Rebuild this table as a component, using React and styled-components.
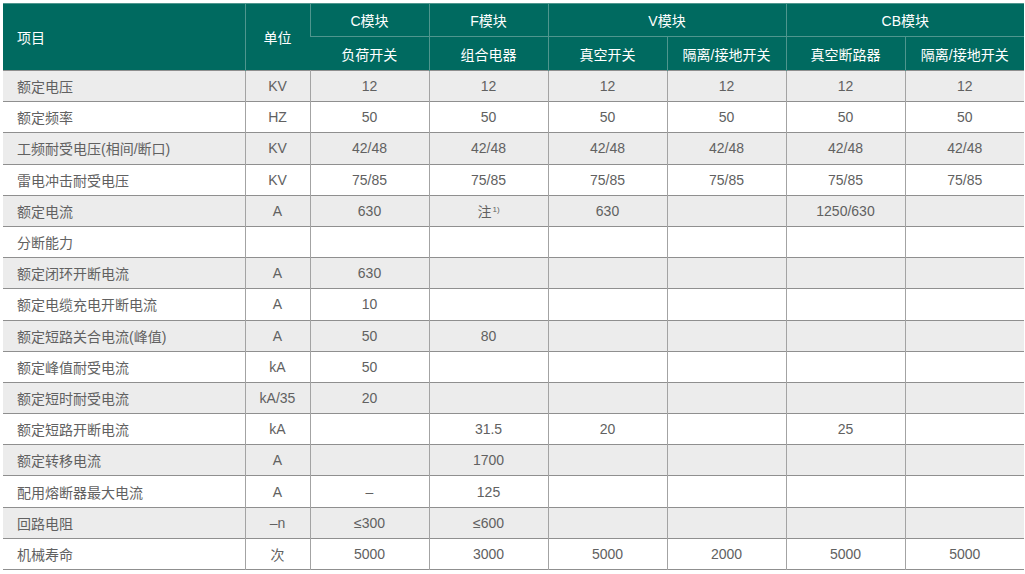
import React from "react";
import styled, { createGlobalStyle } from "styled-components";

const GlobalStyle = createGlobalStyle`
  body {
    margin: 0;
    background: #ffffff;
    font-family: "Liberation Sans", "Noto Sans CJK SC", sans-serif;
  }
`;

const rows = [
  ["额定电压", "KV", "12", "12", "12", "12", "12", "12"],
  ["额定频率", "HZ", "50", "50", "50", "50", "50", "50"],
  ["工频耐受电压(相间/断口)", "KV", "42/48", "42/48", "42/48", "42/48", "42/48", "42/48"],
  ["雷电冲击耐受电压", "KV", "75/85", "75/85", "75/85", "75/85", "75/85", "75/85"],
  ["额定电流", "A", "630", "note", "630", "", "1250/630", ""],
  ["分断能力", "", "", "", "", "", "", ""],
  ["额定闭环开断电流", "A", "630", "", "", "", "", ""],
  ["额定电缆充电开断电流", "A", "10", "", "", "", "", ""],
  ["额定短路关合电流(峰值)", "A", "50", "80", "", "", "", ""],
  ["额定峰值耐受电流", "kA", "50", "", "", "", "", ""],
  ["额定短时耐受电流", "kA/35", "20", "", "", "", "", ""],
  ["额定短路开断电流", "kA", "", "31.5", "20", "", "25", ""],
  ["额定转移电流", "A", "", "1700", "", "", "", ""],
  ["配用熔断器最大电流", "A", "–", "125", "", "", "", ""],
  ["回路电阻", "–n", "≤300", "≤600", "", "", "", ""],
  ["机械寿命", "次", "5000", "3000", "5000", "2000", "5000", "5000"],
];

const Page = styled.div`
  padding: 3px 0 0 3px;
`;

const Table = styled.table`
  width: 1021px;
  border-collapse: collapse;
  table-layout: fixed;
  font-size: 14px;
  border-bottom: 1px solid #8f8f8f;
`;

const HeadRow = styled.tr`
  height: ${(p) => p.$h}px;
`;

const HeadCell = styled.th`
  background: #006a60;
  color: #ffffff;
  font-weight: normal;
  padding: 0 ${(p) => (p.$left ? "14px" : "0")};
  text-align: ${(p) => (p.$left ? "left" : "center")};
  border-left: 1px solid #4f968e;
  border-top: 1px solid #4f968e;
  &:first-child {
    border-left: none;
  }
`;

const Row = styled.tr`
  height: 31.2px;
  background: ${(p) => (p.$shade ? "#ececec" : "#ffffff")};
  border-top: 1px solid #8f8f8f;
`;

const Cell = styled.td`
  color: #616161;
  padding: 0 ${(p) => (p.$left ? "14px" : "0")};
  text-align: ${(p) => (p.$left ? "left" : "center")};
  border-left: 1px solid #a3a3a3;
  white-space: nowrap;
  &:first-child {
    border-left: none;
  }
`;

const Sup = styled.sup`
  font-size: 8px;
  vertical-align: 5px;
  margin-left: 1px;
`;

const renderValue = (v) =>
  v === "note" ? (
    <>
      注<Sup>1)</Sup>
    </>
  ) : (
    v
  );

export default function App() {
  return (
    <Page>
      <GlobalStyle />
      <Table>
        <colgroup>
          <col style={{ width: 242 }} />
          <col style={{ width: 65 }} />
          <col style={{ width: 119 }} />
          <col style={{ width: 119 }} />
          <col style={{ width: 119 }} />
          <col style={{ width: 119 }} />
          <col style={{ width: 119 }} />
          <col style={{ width: 119 }} />
        </colgroup>
        <thead>
          <HeadRow $h={33}>
            <HeadCell rowSpan={2} $left>
              项目
            </HeadCell>
            <HeadCell rowSpan={2}>单位</HeadCell>
            <HeadCell>C模块</HeadCell>
            <HeadCell>F模块</HeadCell>
            <HeadCell colSpan={2}>V模块</HeadCell>
            <HeadCell colSpan={2}>CB模块</HeadCell>
          </HeadRow>
          <HeadRow $h={34}>
            <HeadCell>负荷开关</HeadCell>
            <HeadCell>组合电器</HeadCell>
            <HeadCell>真空开关</HeadCell>
            <HeadCell>隔离/接地开关</HeadCell>
            <HeadCell>真空断路器</HeadCell>
            <HeadCell>隔离/接地开关</HeadCell>
          </HeadRow>
        </thead>
        <tbody>
          {rows.map((r, i) => (
            <Row key={i} $shade={i % 2 === 0}>
              {r.map((v, j) => (
                <Cell key={j} $left={j === 0}>
                  {renderValue(v)}
                </Cell>
              ))}
            </Row>
          ))}
        </tbody>
      </Table>
    </Page>
  );
}
